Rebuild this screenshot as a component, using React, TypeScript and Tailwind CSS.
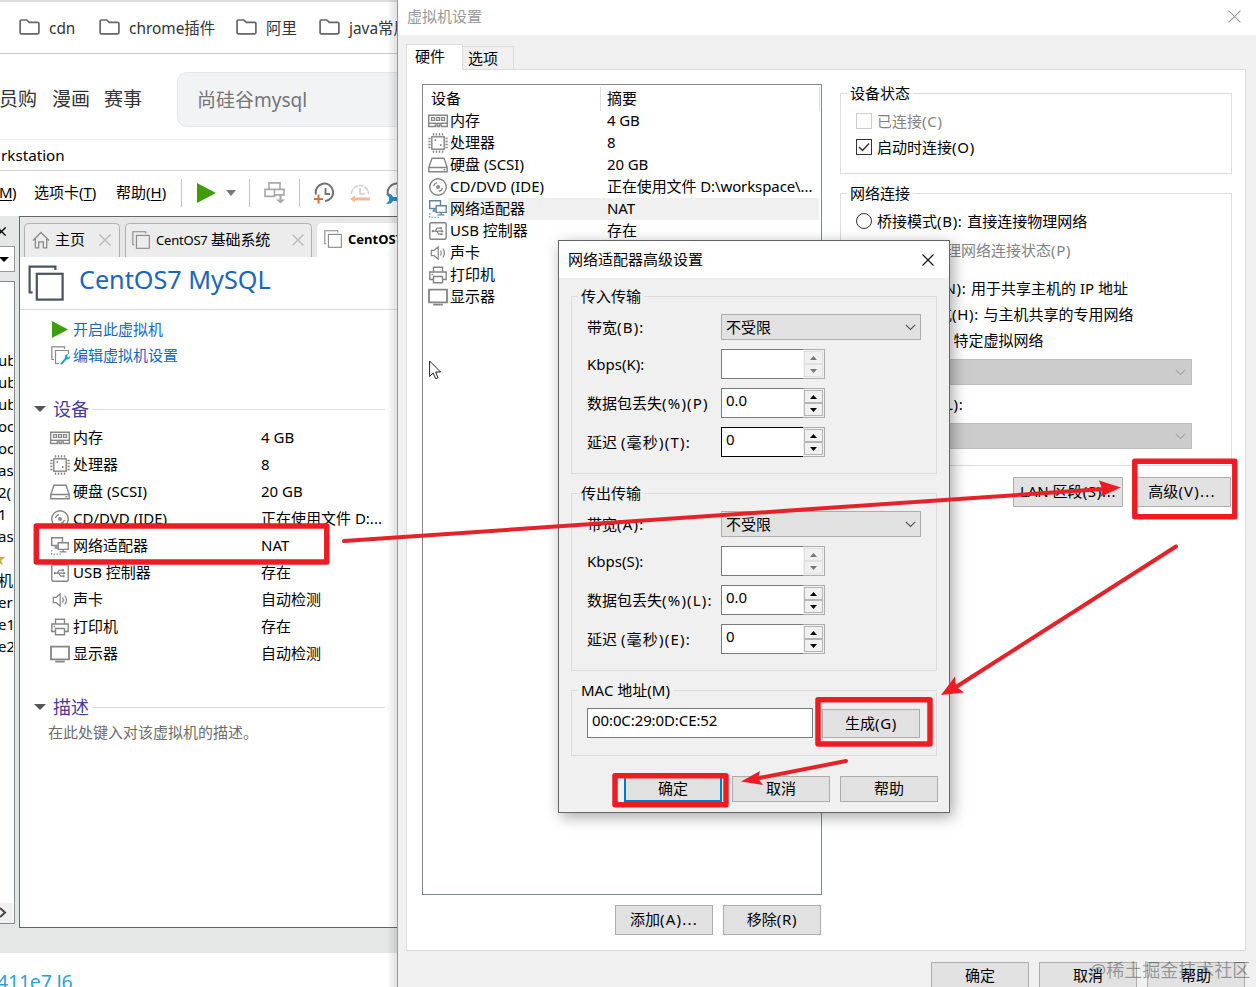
import type { ReactNode } from "react";

type IconName =
  | "memory"
  | "cpu"
  | "disk"
  | "cd"
  | "network"
  | "usb"
  | "sound"
  | "printer"
  | "display";

type Device = { icon: IconName; name: string; summary: string; short?: string };

const devices: Device[] = [
  { icon: "memory", name: "内存", summary: "4 GB" },
  { icon: "cpu", name: "处理器", summary: "8" },
  { icon: "disk", name: "硬盘 (SCSI)", summary: "20 GB" },
  { icon: "cd", name: "CD/DVD (IDE)", summary: "正在使用文件 D:\\workspace\\...", short: "正在使用文件 D:..." },
  { icon: "network", name: "网络适配器", summary: "NAT" },
  { icon: "usb", name: "USB 控制器", summary: "存在" },
  { icon: "sound", name: "声卡", summary: "自动检测" },
  { icon: "printer", name: "打印机", summary: "存在" },
  { icon: "display", name: "显示器", summary: "自动检测" },
];

const treeItems = ["ub", "ub", "ub", "oc", "oc", "as", "2(", "1", "as", "★", "机备", "er", "e1", "e2"];

function DeviceIcon({ name, active }: { name: IconName; active?: boolean }) {
  return (
    <svg
      width="20"
      height="20"
      viewBox="0 0 20 20"
      fill="none"
      stroke={active ? "#5f86a0" : "#858585"}
      strokeWidth="1.4"
      className="shrink-0"
    >
      {name === "memory" && (
        <>
          <path d="M.7 4.2h18.6v11.3h-6v-1.6h-2v1.6h-2v-1.6h-2v1.6H.7z" />
          <path d="M.7 12.3h18.6" />
          <path d="M3.5 6.7h3v2.6h-3zM8.5 6.7h3v2.6h-3zM13.5 6.7h3v2.6h-3z" strokeWidth="1.2" />
        </>
      )}
      {name === "cpu" && (
        <>
          <rect x="3.8" y="3.8" width="12.4" height="12.4" />
          <path d="M5.5.3v2.2M8.5.3v2.2M11.5.3v2.2M14.5.3v2.2M5.5 17.5v2.2M8.5 17.5v2.2M11.5 17.5v2.2M14.5 17.5v2.2" />
          <path d="M.3 5.5h2.2M.3 8.5h2.2M.3 11.5h2.2M.3 14.5h2.2M17.5 5.5h2.2M17.5 8.5h2.2M17.5 11.5h2.2M17.5 14.5h2.2" />
          <path d="M6.5 7.2h1.6M12 12.2h1.6" strokeWidth="1.8" />
        </>
      )}
      {name === "disk" && (
        <>
          <path d="M4 3.2h12l3.2 9.3v4.3H.8v-4.3zM.8 12.5h18.4" />
          <path d="M15.5 14.7h1.8" />
        </>
      )}
      {name === "cd" && (
        <>
          <circle cx="10" cy="10" r="8.3" />
          <circle cx="10" cy="10" r="1.2" strokeWidth="1.6" />
          <path d="M5.5 9A5 5 0 0 1 9 5.6M14.5 11a5 5 0 0 1-3.5 3.4" />
        </>
      )}
      {name === "network" && (
        <>
          <path d="M8 9.5H1.7V1.7h10.8v4.5" />
          <path d="M8.2 6.8h10v6.6h-10zM13.2 13.4v2M9.5 15.9h7" />
          <path d="M4.5 12h3.700M6 9.500V12" />
          <path d="M1.7 14v4.3h10" strokeDasharray="1.5 1.5" strokeWidth="1.1" />
        </>
      )}
      {name === "usb" && (
        <>
          <rect x="1.8" y="1.8" width="16.4" height="16.4" rx="1.5" />
          <path d="M4.5 10.2h10.5M7 10.2l2.3-3h3M8.5 10.2l2.3 3h2.4" strokeWidth="1.2" />
          <circle cx="4.8" cy="10.2" r="1.1" fill="#858585" stroke="none" />
          <path d="M15.8 10.2l-2.4-1.5v3z" fill="#858585" stroke="none" />
          <path d="M12 6.2h2v2h-2zM12.6 12.2h2v2h-2z" fill="#858585" stroke="none" />
        </>
      )}
      {name === "sound" && (
        <>
          <path d="M3.3 7.3h2.9l4-3.4v12.2l-4-3.4H3.3z" strokeWidth="1.2" />
          <path d="M12.5 7.5c1 1.5 1 3.5 0 5M14.8 5.5c2 2.8 2 6.2 0 9" strokeWidth="1.2" />
        </>
      )}
      {name === "printer" && (
        <>
          <path d="M5.5 7V2.2h9V7M5.5 14.5H1.8V7h16.4v7.5h-3.7" />
          <path d="M5.5 11.5h9v6.3h-9z" />
          <path d="M3.5 9.5h1.6" />
        </>
      )}
      {name === "display" && (
        <>
          <path d="M1 2.7h18v12.6H1z" strokeWidth="1.8" />
          <path d="M5.2 17.6h9.6" strokeWidth="1.8" />
        </>
      )}
    </svg>
  );
}

// Spreads the bracketed access keys a little, as the dialog font does
function Keyed({ text, wide }: { text: string; wide?: boolean }) {
  const at = text.indexOf("(");
  if (at <= 0) return <>{text}</>;
  const end = text.indexOf(": ");
  const stop = end < 0 ? text.length : end + 2;
  return (
    <span className="whitespace-pre">
      {text.slice(0, at)}
      <span className={wide ? "tracking-[1.2px]" : "tracking-[0.7px]"}>{text.slice(at, stop)}</span>
      {text.slice(stop)}
    </span>
  );
}

function FolderIcon() {
  return (
    <svg width="21" height="16" viewBox="0 0 21 16" fill="none" stroke="#666" strokeWidth="1.7" className="shrink-0">
      <path d="M2.3 1h5.5l2.4 2.3h8.5c.8 0 1.2.5 1.2 1.2v9c0 .8-.5 1.3-1.2 1.3H2.3c-.8 0-1.2-.5-1.2-1.3V2.3C1.1 1.5 1.5 1 2.3 1z" />
    </svg>
  );
}

function WindowsIcon({ size, color }: { size: number; color: string }) {
  return (
    <svg width={size} height={size} viewBox="0 0 18 18" fill="none" stroke={color} className="shrink-0">
      <path d="M13.7 2.5V.8H.8v12.900h1.5" strokeWidth="1.1" />
      <rect x="4.4" y="4.4" width="12.9" height="12.9" strokeWidth="1.1" />
    </svg>
  );
}

function Cross({ size, color, width = 1 }: { size: number; color: string; width?: number }) {
  return (
    <svg width={size} height={size} viewBox="0 0 12 12" stroke={color} strokeWidth={width} className="shrink-0">
      <path d="M.5.5l11 11M11.500.5l-11 11" />
    </svg>
  );
}

function Play({ width, height }: { width: number; height: number }) {
  return (
    <svg width={width} height={height} viewBox="0 0 16 16" preserveAspectRatio="none" className="shrink-0">
      <path d="M0 0l16 8-16 8z" fill="#3f9c0c" />
    </svg>
  );
}

function Caret({ width = 10, height = 6, color = "#777" }: { width?: number; height?: number; color?: string }) {
  return (
    <svg width={width} height={height} viewBox="0 0 10 6" preserveAspectRatio="none" className="shrink-0">
      <path d="M0 0h10l-5 6z" fill={color} />
    </svg>
  );
}

function ClockIcon({ kind }: { kind: "take" | "revert" | "manage" }) {
  const faded = kind === "revert";
  return (
    <svg width="22" height="22" viewBox="0 0 22 22" fill="none" className="shrink-0">
      {faded ? (
        <>
          <path d="M2.5 12a8.5 8.5 0 1 1 17 0" stroke="#d0d0d0" strokeWidth="1.6" strokeDasharray="5 1" />
          <path d="M11 6v6h5" stroke="#d0d0d0" strokeWidth="1.7" />
          <path d="M1 17l5-3.500v2h15v3H6v2z" fill="#f4b79a" />
        </>
      ) : (
        <>
          <path d="M3 12.500A8.700 8.700 0 1 1 12 19" stroke="#6f6f6f" strokeWidth="2" />
          <path d="M12.500 6v6h4.500" stroke="#6f6f6f" strokeWidth="1.8" />
        </>
      )}
      {kind === "take" && <path d="M5.500 12.500v9M1 17h9" stroke="#d9703a" strokeWidth="2" />}
      {kind === "manage" && (
        <path d="M1 12.500c3-1.500 6-.5 7 2.500h6v4H8c-1.500 3-4.500 3.500-7 2.500l3-2.500v-4z" fill="#2b8cc9" />
      )}
    </svg>
  );
}

function Divider() {
  return <span className="h-[28px] w-px shrink-0 bg-[#c4c4c4]" />;
}

function Bookmark({ label, className }: { label: string; className: string }) {
  return (
    <div className={`flex shrink-0 items-center gap-[9px] ${className}`}>
      <FolderIcon />
      <span className="pt-[2px]">{label}</span>
    </div>
  );
}

function BrowserTop() {
  return (
    <>
      <div className="h-[2px] shrink-0 bg-[#dedede]" />
      <div className="flex h-[52px] shrink-0 items-center whitespace-nowrap border-b border-[#c8c9cb] pl-[19px] text-[15.4px] text-[#333]">
        <Bookmark label="cdn" className="w-[80px]" />
        <Bookmark label="chrome插件" className="w-[137px]" />
        <Bookmark label="阿里" className="w-[83px]" />
        <Bookmark label="java常用" className="" />
      </div>
      <div className="flex h-[86px] shrink-0 items-center whitespace-nowrap border-b border-[#efefef] pt-[5px] text-[19px] text-[#333]">
        <span className="-ml-[1px] w-[53px] shrink-0">员购</span>
        <span className="w-[52px] shrink-0">漫画</span>
        <span className="w-[73px] shrink-0">赛事</span>
        <div className="flex h-[55px] w-[260px] shrink-0 items-center rounded-[10px] border border-[#e3e5e7] bg-[#f1f3f4] pl-[19px] pt-[2px] text-[19px] text-[#757575]">
          尚硅谷mysql
        </div>
      </div>
    </>
  );
}

function Toolbar() {
  return (
    <div className="flex h-[45px] shrink-0 items-center whitespace-nowrap pb-[2px] text-[15px]">
      <span className="w-[34px] shrink-0 tracking-[-0.6px]">
        <span className="-ml-[1px] underline underline-offset-2">M</span>)
      </span>
      <span className="w-[82px] shrink-0">
        选项卡(<u className="underline-offset-2">T</u>)
      </span>
      <span className="w-[65px] shrink-0">
        帮助(<u className="underline-offset-2">H</u>)
      </span>
      <Divider />
      <div className="flex w-[67px] shrink-0 items-center gap-[10px] pl-[15px]">
        <Play width={19} height={20} />
        <Caret />
      </div>
      <Divider />
      <div className="flex w-[49px] shrink-0 pl-[14px]">
        <svg width="22" height="22" viewBox="0 0 22 22" fill="none" stroke="#a8a8a8" strokeWidth="1.6">
          <path d="M5 .9h11v6.500H5zM1 7.400h9.500v7H1zM10.500 7.400H20v5.500h-9.500z" />
          <path d="M16.500 13v5" strokeWidth="2" />
          <path d="M12 17.500h9l-4.500 4z" fill="#a8a8a8" stroke="none" />
        </svg>
      </div>
      <Divider />
      <div className="flex shrink-0 gap-[14px] pl-[13px]">
        <ClockIcon kind="take" />
        <ClockIcon kind="revert" />
        <ClockIcon kind="manage" />
      </div>
    </div>
  );
}

function Sidebar() {
  return (
    <div className="flex w-[19px] shrink-0 flex-col">
      <div className="flex h-[30px] items-center">
        <span className="-ml-[3px]">
          <Cross size={9} color="#000" width={1.8} />
        </span>
      </div>
      <div className="flex h-[26px] w-[15px] items-center overflow-hidden border border-l-0 border-[#999] bg-white">
        <span className="-ml-[1px] flex">
          <Caret width={10} height={5} color="#000" />
        </span>
      </div>
      <div className="mt-[9px] flex h-[643px] w-[15px] flex-col overflow-hidden border border-l-0 border-[#828790] bg-white pt-[67px] text-[15px]">
        {treeItems.map((t, i) => (
          <div
            key={i}
            className={`flex h-[22px] w-[13px] shrink-0 items-center overflow-hidden whitespace-nowrap leading-none ${t === "★" ? "text-[#c9b23a]" : ""}`}
          >
            <span className={t === "★" ? "-ml-[9px]" : "-ml-[2px]"}>{t}</span>
          </div>
        ))}
        <div className="mt-auto flex h-[20px] w-[13px] shrink-0 items-center bg-[#f0f0f0] pb-[2px]">
          <svg width="7" height="11" viewBox="0 0 7 11" fill="none" stroke="#444" strokeWidth="2">
            <path d="M0 1l5 4.500L0 10" />
          </svg>
        </div>
      </div>
    </div>
  );
}

function SectionTitle({ children }: { children: ReactNode }) {
  return (
    <div className="flex h-[28px] items-center pl-[14px] pr-[13px] text-[18px] leading-none text-[#463b98]">
      <Caret width={12} height={6} color="#555" />
      <span className="ml-[7px]">{children}</span>
      <span className="ml-[3px] h-px grow bg-[#dcdcdc]" />
    </div>
  );
}

function VmPage() {
  return (
    <div className="flex h-[712px] w-[379px] shrink-0 flex-col overflow-hidden border border-r-0 border-[#666] bg-white">
      <div className="flex h-[40px] shrink-0 items-end whitespace-nowrap bg-[#e6e6e6] pl-[4px] text-[14px] leading-none">
        <div className="flex h-[34px] w-[96px] shrink-0 items-center rounded-t-[5px] border border-b-0 border-[#b0b0b0] bg-[#ececec] pb-[2px] pl-[7px]">
          <svg width="18" height="18" viewBox="0 0 18 18" fill="none" stroke="#8a8a8a" strokeWidth="1.3">
            <path d="M1 9.500L9 1.500l8 8M3.300 8v8.800h3.400v-6h4.600v6h3.400V8" />
          </svg>
          <span className="ml-[5px] mr-[14px] text-[15px]">主页</span>
          <Cross size={12} color="#bbb" width={1.4} />
        </div>
        <div className="ml-[5px] flex h-[34px] w-[187px] shrink-0 items-center rounded-t-[5px] border border-b-0 border-[#b0b0b0] bg-[#ececec] pb-[2px] pl-[6px]">
          <WindowsIcon size={18} color="#888" />
          <span className="ml-[6px] w-[136px] text-[13px] tracking-[-0.2px]">
            CentOS7 <span className="text-[15px]">基础系统</span>
          </span>
          <Cross size={12} color="#bbb" width={1.4} />
        </div>
        <div className="ml-[5px] flex h-[34px] w-[120px] shrink-0 items-center rounded-t-[5px] bg-white pb-[2px] pl-[7px]">
          <WindowsIcon size={18} color="#888" />
          <span className="ml-[6px] text-[13px] font-bold">CentOS7</span>
        </div>
      </div>
      <div className="flex h-[53px] shrink-0 items-center border-b border-[#dcdcdc] pl-[8px]">
        <WindowsIcon size={36} color="#4a545c" />
        <span className="-mt-[7px] ml-[15px] whitespace-nowrap text-[25.2px] leading-none text-[#1a66b8]">CentOS7 MySQL</span>
      </div>
      <div className="flex shrink-0 flex-col pl-[31px] pt-[6px] text-[15px] leading-none text-[#1a66b8]">
        <div className="flex h-[26px] items-center">
          <span className="flex w-[22px] pl-[1px]">
            <Play width={16} height={17} />
          </span>
          开启此虚拟机
        </div>
        <div className="flex h-[26px] items-center">
          <svg width="19" height="19" viewBox="0 0 19 19" fill="none" stroke="#888" strokeWidth="1.2" className="mr-[3px]">
            <path d="M13.500 3V.8H.8v12.700H3M8 17.500H4.500v-13h13V8" />
            <path d="M9 18l5-6a3 3 0 0 1 3-4l-1 2.500 1.500 1L19 10a3 3 0 0 1-3.500 3.500L11 18.500z" fill="#1fa5c4" stroke="none" />
          </svg>
          编辑虚拟机设置
        </div>
      </div>
      <div className="shrink-0 pt-[27px]">
        <SectionTitle>设备</SectionTitle>
        <div className="pt-px">
          {devices.map((d) => (
            <div key={d.name} className="flex h-[27px] items-center whitespace-nowrap pl-[30px] text-[15px] leading-none">
              <DeviceIcon name={d.icon} />
              <span className="ml-[3px] w-[188px]">{d.name}</span>
              <span>{d.short ?? d.summary}</span>
            </div>
          ))}
        </div>
      </div>
      <div className="shrink-0 pt-[26px]">
        <SectionTitle>描述</SectionTitle>
        <div className="flex h-[22px] items-center pl-[28px] text-[15px] leading-none text-[#6e6e6e]">在此处键入对该虚拟机的描述。</div>
      </div>
    </div>
  );
}

function Button({ label, primary, wide, className = "" }: { label: string; primary?: boolean; wide?: boolean; className?: string }) {
  return (
    <button
      type="button"
      className={`flex shrink-0 items-center justify-center whitespace-nowrap bg-[#e1e1e1] pb-px leading-none ${primary ? "border-2 border-[#0078d7]" : "border border-[#adadad]"} ${className}`}
    >
      <Keyed text={label} wide={wide} />
    </button>
  );
}

function Group({ title, className, children }: { title: string; className: string; children: ReactNode }) {
  return (
    <fieldset className={`shrink-0 border border-[#dcdcdc] pl-[15px] ${className}`}>
      <legend className="-ml-[9px] h-[16px] px-[3px] leading-[16px]">{title}</legend>
      {children}
    </fieldset>
  );
}

function Chevron({ color = "#555" }: { color?: string }) {
  return (
    <svg width="11" height="7" viewBox="0 0 11 7" fill="none" stroke={color} strokeWidth="1.2">
      <path d="M.8.8l4.700 4.700L10.200.8" />
    </svg>
  );
}

function Spinner({ value, disabled, focused }: { value?: string; disabled?: boolean; focused?: boolean }) {
  const arrow = disabled ? "#777" : "#000";
  return (
    <div className="flex h-[30px] w-[104px]">
      <div
        className={`flex w-[82px] items-center border border-r-0 bg-white pb-[5px] pl-[4px] ${focused ? "border-black" : "border-[#7a7a7a]"}`}
      >
        {value}
      </div>
      <div className="flex w-[22px] flex-col border border-l-0 border-[#adadad] bg-[#f0f0f0] p-px">
        <div className={`flex h-[13px] items-center justify-center border ${disabled ? "border-[#e0e0e0]" : "border-[#b5b5b5]"}`}>
          <span className="flex rotate-180">
            <Caret width={7} height={4} color={arrow} />
          </span>
        </div>
        <div className={`flex h-[13px] items-center justify-center border ${disabled ? "border-[#e0e0e0]" : "border-[#b5b5b5]"}`}>
          <Caret width={7} height={4} color={arrow} />
        </div>
      </div>
    </div>
  );
}

function FieldRow({ label, className, children }: { label: string; className: string; children: ReactNode }) {
  return (
    <div className={`flex items-center whitespace-nowrap leading-none ${className}`}>
      <span className="w-[134px] shrink-0">{label.startsWith("Kbps") ? label : <Keyed text={label} wide />}</span>
      {children}
    </div>
  );
}

function TransferGroup({ title, keys, className, focused }: { title: string; keys: string[]; className: string; focused?: boolean }) {
  return (
    <Group title={title} className={`h-[186px] w-[366px] ${className}`}>
      <FieldRow label={keys[0]} className="mt-[10px] h-[26px]">
        <div className="flex h-[26px] w-[200px] items-center justify-between border border-[#adadad] bg-[#e1e1e1] pl-[4px] pr-[4px]">
          不受限
          <Chevron />
        </div>
      </FieldRow>
      <FieldRow label={keys[1]} className="mt-[9px]">
        <Spinner disabled />
      </FieldRow>
      <FieldRow label={keys[2]} className="mt-[9px]">
        <Spinner value="0.0" />
      </FieldRow>
      <FieldRow label={keys[3]} className="mt-[9px]">
        <Spinner value="0" focused={focused} />
      </FieldRow>
    </Group>
  );
}

function AdvancedDialog() {
  return (
    <div className="absolute left-[558px] top-[240px] flex h-[573px] w-[392px] flex-col border border-[#666] bg-[#f0f0f0] text-[15px] shadow-[3px_4px_14px_rgba(0,0,0,0.35)]">
      <div className="flex h-[37px] shrink-0 items-center justify-between bg-white pl-[9px] pr-[15px]">
        <span className="leading-none">网络适配器高级设置</span>
        <Cross size={12} color="#111" width={1.1} />
      </div>
      <div className="flex flex-col pl-[12px]">
        <TransferGroup
          title="传入传输"
          keys={["带宽(B):", "Kbps(K):", "数据包丢失(%)(P)", "延迟 (毫秒)(T):"]}
          className="mt-[10px]"
          focused
        />
        <TransferGroup
          title="传出传输"
          keys={["带宽(A):", "Kbps(S):", "数据包丢失(%)(L):", "延迟 (毫秒)(E):"]}
          className="mt-[11px]"
        />
        <Group title="MAC 地址(M)" className="mt-[11px] h-[74px] w-[366px]">
          <div className="mt-[10px] flex gap-[9px]">
            <div className="flex h-[30px] w-[226px] items-center border border-[#7a7a7a] bg-white pb-[5px] pl-[4px] leading-none tracking-[-0.1px]">
              00:0C:29:0D:CE:52
            </div>
            <Button label="生成(G)" className="mt-px h-[29px] w-[98px]" />
          </div>
        </Group>
      </div>
      <div className="mt-[20px] flex gap-[10px] pl-[65px]">
        <Button label="确定" primary className="h-[26px] w-[98px]" />
        <Button label="取消" className="h-[26px] w-[98px]" />
        <Button label="帮助" className="h-[26px] w-[98px]" />
      </div>
    </div>
  );
}

function HardwareList() {
  return (
    <div className="flex h-[811px] w-[400px] shrink-0 flex-col border border-[#828790] bg-white">
      <div className="flex h-[25px] shrink-0 items-center pt-[2px] leading-none">
        <span className="w-[177px] pl-[8px]">设备</span>
        <span className="h-[24px] w-px bg-[#dedede]" />
        <span className="w-[218px] pl-[6px]">摘要</span>
        <span className="h-[24px] w-px bg-[#dedede]" />
      </div>
      {devices.map((d) => {
        const selected = d.icon === "network";
        return (
          <div key={d.name} className="flex h-[22px] shrink-0 items-center whitespace-nowrap pl-[5px] leading-none">
            <DeviceIcon name={d.icon} active={selected} />
            <div className={`flex h-[22px] w-[371px] items-center pb-px pl-[2px] ${selected ? "bg-[#f0f0f0]" : ""}`}>
              <span className="w-[157px] shrink-0">{d.name}</span>
              <span className="tracking-[-0.1px]">{d.summary}</span>
            </div>
          </div>
        );
      })}
    </div>
  );
}

function Radio({ label, className = "" }: { label: string; className?: string }) {
  return (
    <div className={`flex h-[26px] items-center gap-[5px] ${className}`}>
      <span className="size-[16px] rounded-full border border-[#333] bg-white" />
      <Keyed text={label} />
    </div>
  );
}

function GrayedSelect() {
  return (
    <div className="ml-[21px] mt-[6px] flex h-[26px] w-[315px] items-center justify-end border border-[#bfbfbf] bg-[#cccccc] pr-[5px]">
      <Chevron color="#a8a8a8" />
    </div>
  );
}

function NetworkSettings() {
  return (
    <div className="mt-px flex w-[392px] shrink-0 flex-col">
      <Group title="设备状态" className="h-[89px] leading-none">
        <div className="mt-[7px] flex h-[26px] items-center gap-[5px] text-[#838383]">
          <span className="size-[16px] border border-[#ccc] bg-white" />
          <Keyed text="已连接(C)" />
        </div>
        <div className="flex h-[26px] items-center gap-[5px]">
          <svg width="16" height="16" viewBox="0 0 16 16" fill="none" stroke="#333">
            <rect x=".5" y=".5" width="15" height="15" />
            <path d="M3 8l3.500 3.500L13 4.500" strokeWidth="1.5" />
          </svg>
          <Keyed text="启动时连接(O)" />
        </div>
      </Group>
      <Group title="网络连接" className="mt-[11px] h-[281px] whitespace-nowrap leading-none">
        <Radio className="mt-[7px]" label="桥接模式(B): 直接连接物理网络" />
        <div className="mt-[3px] flex h-[26px] items-center gap-[5px] pl-[24px] text-[#838383]">
          <span className="size-[16px] border border-[#ccc] bg-white" />
          <Keyed text="复制物理网络连接状态(P)" />
        </div>
        <Radio className="mt-[12px]" label="NAT 模式(N): 用于共享主机的 IP 地址" />
        <Radio label="仅主机模式(H): 与主机共享的专用网络" />
        <Radio label="自定义(U): 特定虚拟网络" />
        <GrayedSelect />
        <Radio className="mt-[6px]" label="LAN 区段(L):" />
        <GrayedSelect />
      </Group>
      <div className="mt-[11px] flex justify-end gap-[10px] pr-px">
        <Button label="LAN 区段(S)..." className="h-[30px] w-[110px]" />
        <Button label="高级(V)..." wide className="h-[30px] w-[98px]" />
      </div>
    </div>
  );
}

function SettingsWindow() {
  return (
    <div className="relative flex h-[987px] w-[858px] shrink-0 flex-col overflow-hidden bg-[#f0f0f0] text-[15px]">
      <div className="flex h-[35px] shrink-0 items-center justify-between bg-white pb-[2px] pl-[9px] pr-[15px] text-[#999]">
        <span className="leading-none">虚拟机设置</span>
        <Cross size={13} color="#999" />
      </div>
      <div className="flex h-[34px] shrink-0 items-end pl-[8px] leading-none">
        <div className="relative -mb-px flex h-[26px] w-[57px] items-center border border-b-0 border-[#dcdcdc] bg-white pb-[2px] pl-[8px]">硬件</div>
        <div className="flex h-[23px] w-[51px] items-center border border-b-0 border-l-0 border-[#dcdcdc] pl-[5px]">选项</div>
      </div>
      <div className="ml-[8px] flex h-[882px] w-[840px] shrink-0 gap-[18px] border border-[#dcdcdc] bg-white pl-[15px] pt-[14px]">
        <div className="flex flex-col">
          <HardwareList />
          <div className="mt-[10px] flex gap-[10px] pl-[193px]">
            <Button label="添加(A)..." wide className="h-[30px] w-[98px]" />
            <Button label="移除(R)" className="h-[30px] w-[98px]" />
          </div>
        </div>
        <NetworkSettings />
      </div>
      <div className="mt-[11px] flex shrink-0 gap-[10px] pl-[533px]">
        <Button label="确定" className="h-[27px] w-[98px]" />
        <Button label="取消" className="h-[27px] w-[98px]" />
        <Button label="帮助" className="h-[27px] w-[98px]" />
      </div>
    </div>
  );
}

function Annotations() {
  return (
    <svg className="absolute left-0 top-0" width="1256" height="987" viewBox="0 0 1256 987" fill="none">
      <g stroke="#ed1c24" strokeWidth="5.5" strokeLinejoin="round">
        <rect x="36.3" y="526" width="290.500" height="36" />
        <rect x="1134.800" y="461.300" width="100" height="55.500" />
        <rect x="818" y="699.800" width="112" height="44.200" />
        <rect x="615" y="775.800" width="111" height="29" />
      </g>
      <g stroke="#e3222a" strokeWidth="4" strokeLinecap="round">
        <path d="M344 541L1104 489" />
        <path d="M1176 546.500L956 687" />
        <path d="M846 761L757 778.500" />
      </g>
      <g fill="#ed1c24">
        <path d="M1121 487.500l-22-7 3 8-1 8z" />
        <path d="M941 695l14-18.500 1 10 8 6z" />
        <path d="M741 781.500l19-10.500-2 7.500 5 6.500z" />
      </g>
    </svg>
  );
}

export default function App() {
  return (
    <div className="relative flex h-[987px] w-[1256px] overflow-hidden bg-white font-['Noto_Sans','Noto_Sans_CJK_SC',sans-serif] text-black">
      <div className="flex w-[398px] shrink-0 flex-col overflow-hidden">
        <BrowserTop />
        <div className="flex h-[31px] shrink-0 items-center border-b border-[#d5d5d5] pl-px text-[15.2px]">rkstation</div>
        <Toolbar />
        <div className="flex h-[737px] shrink-0 bg-[#e5e6e6]">
          <Sidebar />
          <VmPage />
        </div>
        <div className="-ml-[3px] flex grow items-end overflow-hidden whitespace-nowrap text-[19.5px] leading-[22px] text-[#2ba2d6]">
          <span className="-mb-[6px] tracking-[-0.2px]">411e7 J6</span>
        </div>
      </div>
      <div className="pointer-events-none absolute left-[387px] top-0 h-full w-[11px] border-r border-[#999] bg-linear-to-r from-transparent to-black/12" />
      <SettingsWindow />
      <svg className="absolute left-[429px] top-[360px]" width="12" height="20" viewBox="0 0 12 20" fill="white" stroke="#222">
        <path d="M.6 1v15.500l3.600-3.500 2.400 5.700 2.400-1L6.600 12h5z" />
      </svg>
      <AdvancedDialog />
      <div className="absolute left-[1090px] top-[957px] whitespace-nowrap text-[18px] leading-[26px] text-black/35">@稀土掘金技术社区</div>
      <Annotations />
    </div>
  );
}
